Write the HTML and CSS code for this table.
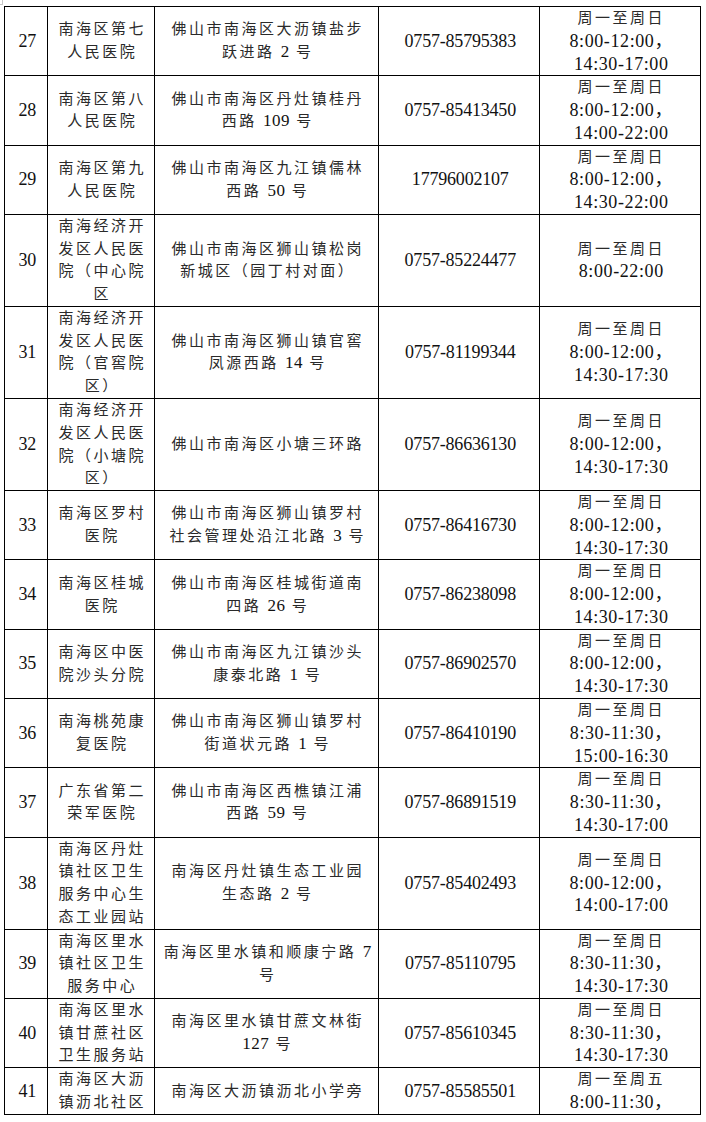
FILE: index.html
```html
<!DOCTYPE html>
<html lang="zh-CN">
<head>
<meta charset="utf-8">
<title>南海区医院列表</title>
<link rel="stylesheet" href="styles.css">
</head>
<body>
<div class="sheet">
<table class="grid">
<colgroup><col class="c1"><col class="c2"><col class="c3"><col class="c4"><col class="c5"></colgroup>
<tbody>
<tr>
<td class="num">27</td>
<td class="cn">南海区第七<br>人民医院</td>
<td class="cn">佛山市南海区大沥镇盐步<br>跃进路 <span class="en">2</span> 号</td>
<td class="tel">0757-85795383</td>
<td class="time"><span class="wk">周一至周日</span><span class="hr">8:00-12:00，</span><span class="hr">14:30-17:00</span></td>
</tr>
<tr>
<td class="num">28</td>
<td class="cn">南海区第八<br>人民医院</td>
<td class="cn">佛山市南海区丹灶镇桂丹<br>西路 <span class="en">109</span> 号</td>
<td class="tel">0757-85413450</td>
<td class="time"><span class="wk">周一至周日</span><span class="hr">8:00-12:00，</span><span class="hr">14:00-22:00</span></td>
</tr>
<tr>
<td class="num">29</td>
<td class="cn">南海区第九<br>人民医院</td>
<td class="cn">佛山市南海区九江镇儒林<br>西路 <span class="en">50</span> 号</td>
<td class="tel">17796002107</td>
<td class="time"><span class="wk">周一至周日</span><span class="hr">8:00-12:00，</span><span class="hr">14:30-22:00</span></td>
</tr>
<tr>
<td class="num">30</td>
<td class="cn">南海经济开<br>发区人民医<br>院（中心院<br>区</td>
<td class="cn">佛山市南海区狮山镇松岗<br>新城区（园丁村对面）</td>
<td class="tel">0757-85224477</td>
<td class="time"><span class="wk">周一至周日</span><span class="hr">8:00-22:00</span></td>
</tr>
<tr>
<td class="num">31</td>
<td class="cn">南海经济开<br>发区人民医<br>院（官窖院<br>区）</td>
<td class="cn">佛山市南海区狮山镇官窖<br>凤源西路 <span class="en">14</span> 号</td>
<td class="tel">0757-81199344</td>
<td class="time"><span class="wk">周一至周日</span><span class="hr">8:00-12:00，</span><span class="hr">14:30-17:30</span></td>
</tr>
<tr>
<td class="num">32</td>
<td class="cn">南海经济开<br>发区人民医<br>院（小塘院<br>区）</td>
<td class="cn">佛山市南海区小塘三环路</td>
<td class="tel">0757-86636130</td>
<td class="time"><span class="wk">周一至周日</span><span class="hr">8:00-12:00，</span><span class="hr">14:30-17:30</span></td>
</tr>
<tr>
<td class="num">33</td>
<td class="cn">南海区罗村<br>医院</td>
<td class="cn">佛山市南海区狮山镇罗村<br>社会管理处沿江北路 <span class="en">3</span> 号</td>
<td class="tel">0757-86416730</td>
<td class="time"><span class="wk">周一至周日</span><span class="hr">8:00-12:00，</span><span class="hr">14:30-17:30</span></td>
</tr>
<tr>
<td class="num">34</td>
<td class="cn">南海区桂城<br>医院</td>
<td class="cn">佛山市南海区桂城街道南<br>四路 <span class="en">26</span> 号</td>
<td class="tel">0757-86238098</td>
<td class="time"><span class="wk">周一至周日</span><span class="hr">8:00-12:00，</span><span class="hr">14:30-17:30</span></td>
</tr>
<tr>
<td class="num">35</td>
<td class="cn">南海区中医<br>院沙头分院</td>
<td class="cn">佛山市南海区九江镇沙头<br>康泰北路 <span class="en">1</span> 号</td>
<td class="tel">0757-86902570</td>
<td class="time"><span class="wk">周一至周日</span><span class="hr">8:00-12:00，</span><span class="hr">14:30-17:30</span></td>
</tr>
<tr>
<td class="num">36</td>
<td class="cn">南海桃苑康<br>复医院</td>
<td class="cn">佛山市南海区狮山镇罗村<br>街道状元路 <span class="en">1</span> 号</td>
<td class="tel">0757-86410190</td>
<td class="time"><span class="wk">周一至周日</span><span class="hr">8:30-11:30，</span><span class="hr">15:00-16:30</span></td>
</tr>
<tr>
<td class="num">37</td>
<td class="cn">广东省第二<br>荣军医院</td>
<td class="cn">佛山市南海区西樵镇江浦<br>西路 <span class="en">59</span> 号</td>
<td class="tel">0757-86891519</td>
<td class="time"><span class="wk">周一至周日</span><span class="hr">8:30-11:30，</span><span class="hr">14:30-17:00</span></td>
</tr>
<tr>
<td class="num">38</td>
<td class="cn">南海区丹灶<br>镇社区卫生<br>服务中心生<br>态工业园站</td>
<td class="cn">南海区丹灶镇生态工业园<br>生态路 <span class="en">2</span> 号</td>
<td class="tel">0757-85402493</td>
<td class="time"><span class="wk">周一至周日</span><span class="hr">8:00-12:00，</span><span class="hr">14:00-17:00</span></td>
</tr>
<tr>
<td class="num">39</td>
<td class="cn">南海区里水<br>镇社区卫生<br>服务中心</td>
<td class="cn">南海区里水镇和顺康宁路 <span class="en">7</span><br>号</td>
<td class="tel">0757-85110795</td>
<td class="time"><span class="wk">周一至周日</span><span class="hr">8:30-11:30，</span><span class="hr">14:30-17:30</span></td>
</tr>
<tr>
<td class="num">40</td>
<td class="cn">南海区里水<br>镇甘蔗社区<br>卫生服务站</td>
<td class="cn">南海区里水镇甘蔗文林街<br><span class="en">127</span> 号</td>
<td class="tel">0757-85610345</td>
<td class="time"><span class="wk">周一至周日</span><span class="hr">8:30-11:30，</span><span class="hr">14:30-17:30</span></td>
</tr>
<tr>
<td class="num">41</td>
<td class="cn">南海区大沥<br>镇沥北社区</td>
<td class="cn">南海区大沥镇沥北小学旁</td>
<td class="tel">0757-85585501</td>
<td class="time"><span class="wk">周一至周五</span><span class="hr">8:00-11:30，</span></td>
</tr>
</tbody>
</table>
</div>
</body>
</html>
```

FILE: styles.css
```css
html, body {
  margin: 0;
  padding: 0;
  background: #ffffff;
}

body {
  font-family: "Liberation Serif", "Noto Sans CJK SC", serif;
  color: #111111;
  position: relative;
}

body::before {
  content: "";
  position: absolute;
  left: 0;
  top: 0;
  width: 2px;
  height: 4px;
  border-right: 1px solid #c8c8c8;
  border-bottom: 1px solid #c8c8c8;
}

.sheet {
  padding: 6px 0 0 4px;
}

.grid {
  border-collapse: collapse;
  table-layout: fixed;
  width: 696px;
}

.c1 { width: 43px; }
.c2 { width: 107px; }
.c3 { width: 224px; }
.c4 { width: 161px; }
.c5 { width: 161px; }

.grid td {
  border: 1px solid #000000;
  padding: 0 1px 0 3.5px;
  text-align: center;
  vertical-align: middle;
  line-height: 22.76px;
  white-space: nowrap;
  overflow: hidden;
}

.cn {
  font-size: 15px;
  letter-spacing: 2.5px;
  color: #2a2a2a;
}

.en {
  font-size: 17px;
  letter-spacing: 0.5px;
  color: #111111;
}

.num,
.tel {
  font-size: 18px;
  letter-spacing: -0.2px;
}

.time {
  font-size: 18px;
}

.wk {
  display: block;
  font-size: 15px;
  letter-spacing: 2.5px;
  color: #2a2a2a;
}

.hr {
  display: block;
  font-size: 18px;
  letter-spacing: 0.6px;
}
```
